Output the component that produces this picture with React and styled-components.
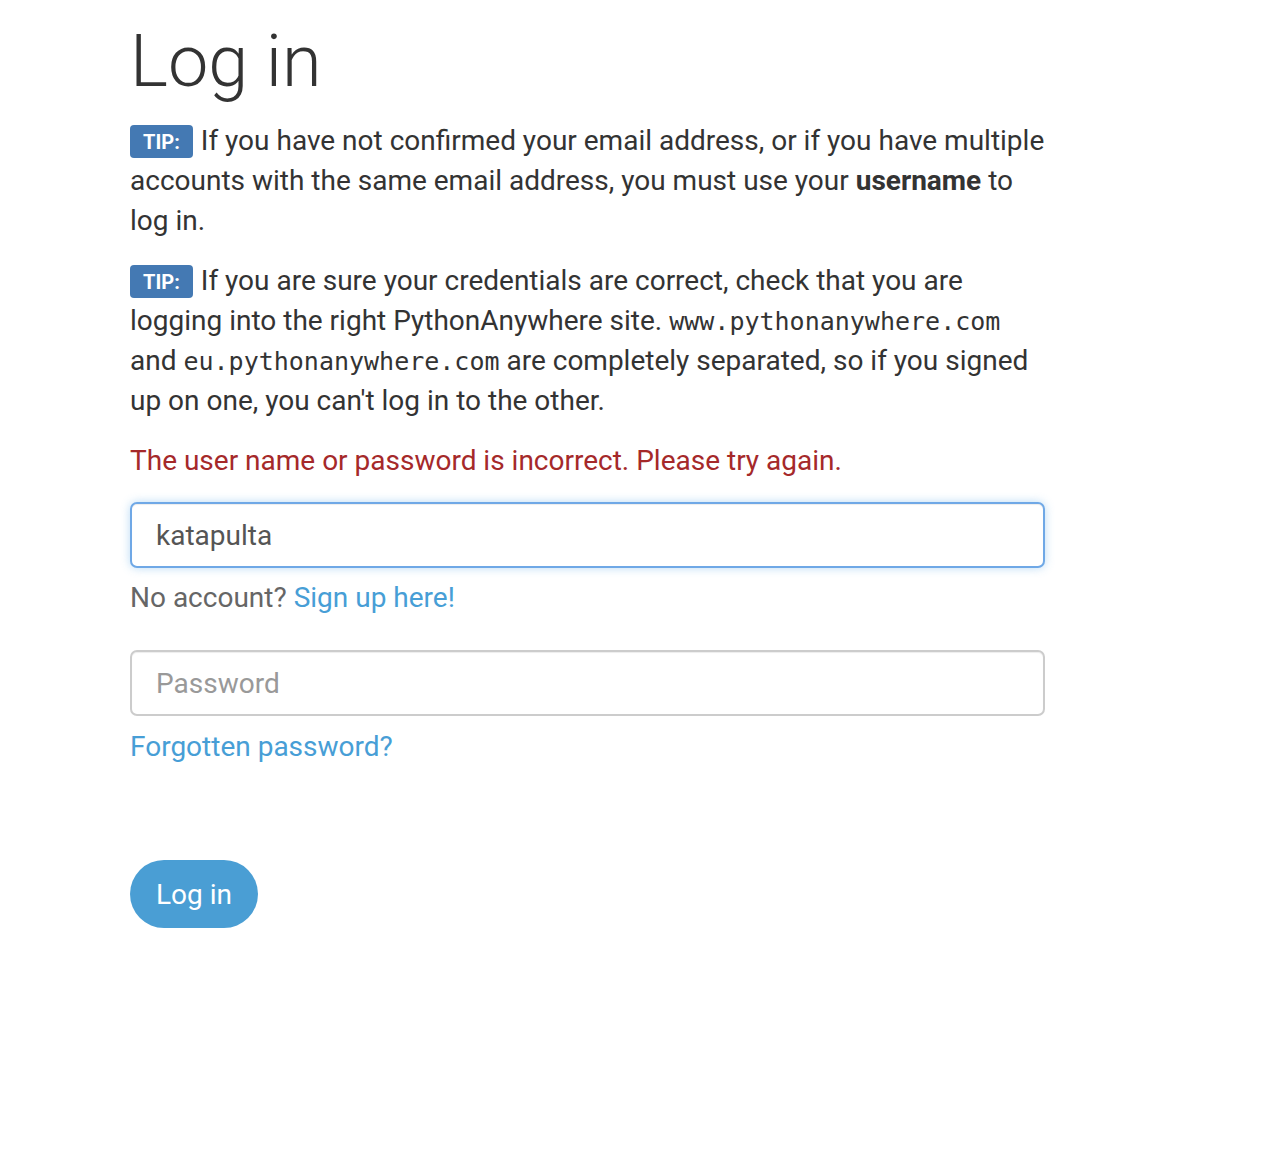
import * as React from 'react';
import styled, { createGlobalStyle } from 'styled-components';

const GlobalStyle = createGlobalStyle`
  body {
    margin: 0;
    background: #fff;
    color: #333;
    font-family: Roboto, "Helvetica Neue", Arial, sans-serif;
  }
`;

const Page = styled.div`
  width: 915px;
  padding: 0 0 200px 130px;
`;

const Title = styled.h1`
  margin: 18px 0 15px;
  font-size: 72px;
  font-weight: 300;
  line-height: 88px;
  color: #333;
`;

const Para = styled.p`
  margin: 0 0 20px;
  font-size: 28px;
  line-height: 40px;
  color: ${(p) => p.color || '#333'};
`;

const Tip = styled.span`
  display: inline-block;
  padding: 0 13px;
  margin-right: 8px;
  height: 33px;
  line-height: 34px;
  vertical-align: 1px;
  border-radius: 4px;
  background: #4479b3;
  color: #fff;
  font-size: 20px;
  font-weight: 700;
`;

const Code = styled.code`
  font-family: "DejaVu Sans Mono", "Liberation Mono", monospace;
  font-size: 25px;
  line-height: 1;
  color: #333;
`;

const Field = styled.input`
  display: block;
  box-sizing: border-box;
  width: 100%;
  height: 66px;
  margin: ${(p) => p.top}px 0 0;
  padding: 0 24px;
  border: 2px solid ${(p) => (p.focused ? '#6fa8e6' : '#ccc')};
  border-radius: 7px;
  box-shadow: ${(p) =>
    p.focused
      ? 'inset 0 1px 1px rgba(0,0,0,.075), 0 0 10px rgba(102,175,233,.45)'
      : 'inset 0 1px 1px rgba(0,0,0,.075)'};
  font-family: Roboto, Arial, sans-serif;
  font-size: 28px;
  color: #555;
  outline: none;
  &::placeholder {
    color: #999;
  }
`;

const Help = styled.div`
  margin-top: ${(p) => p.top}px;
  font-size: 28px;
  line-height: 40px;
  color: #666;
`;

const Link = styled.a`
  color: #479ed6;
  text-decoration: none;
`;

const Button = styled.button`
  display: block;
  margin-top: 93px;
  height: 68px;
  padding: 0 26px;
  border: none;
  border-radius: 34px;
  background: #4a9ed4;
  color: #fff;
  font-family: Roboto, Arial, sans-serif;
  font-size: 28px;
`;

export default function App() {
  return (
    <>
      <GlobalStyle />
      <Page>
        <Title>Log in</Title>
        <Para>
          <Tip>TIP:</Tip>If you have not confirmed your email address, or if you
          have multiple accounts with the same email address, you must use your{' '}
          <strong>username</strong> to log in.
        </Para>
        <Para>
          <Tip>TIP:</Tip>If you are sure your credentials are correct, check that
          you are logging into the right PythonAnywhere site.{' '}
          <Code>www.pythonanywhere.com</Code> and <Code>eu.pythonanywhere.com</Code>{' '}
          are completely separated, so if you signed up on one, you can't log in
          to the other.
        </Para>
        <Para color="#a5292a">
          The user name or password is incorrect. Please try again.
        </Para>
        <Field top={21} focused defaultValue="katapulta" />
        <Help top={10}>
          No account? <Link href="#">Sign up here!</Link>
        </Help>
        <Field top={32} type="password" placeholder="Password" />
        <Help top={11}>
          <Link href="#">Forgotten password?</Link>
        </Help>
        <Button>Log in</Button>
      </Page>
    </>
  );
}
